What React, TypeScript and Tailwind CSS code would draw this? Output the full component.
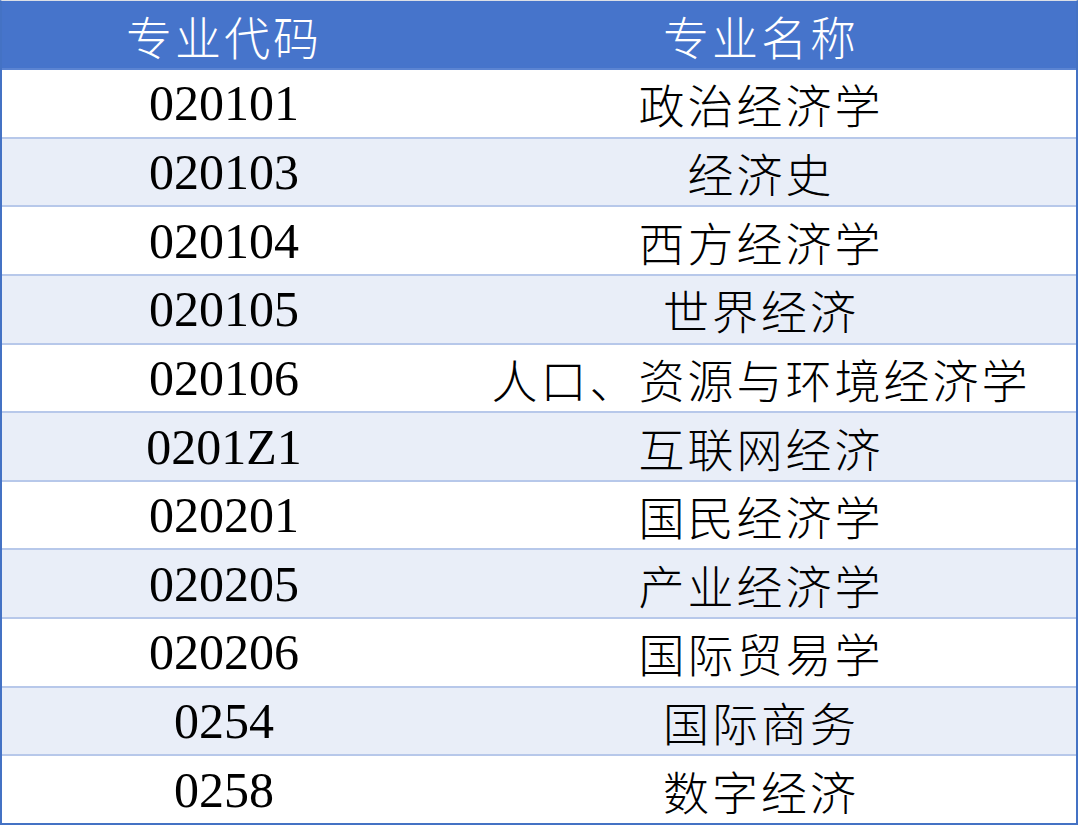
import React from 'react';

const rows: [string, string][] = [
  ['020101', '政治经济学'],
  ['020103', '经济史'],
  ['020104', '西方经济学'],
  ['020105', '世界经济'],
  ['020106', '人口、资源与环境经济学'],
  ['0201Z1', '互联网经济'],
  ['020201', '国民经济学'],
  ['020205', '产业经济学'],
  ['020206', '国际贸易学'],
  ['0254', '国际商务'],
  ['0258', '数字经济'],
];

const cjk = { fontFamily: '"Noto Sans CJK SC", sans-serif' };
const serif = { fontFamily: '"Liberation Serif", "Times New Roman", serif' };

const App: React.FC = () => {
  return (
    <div className="w-[1080px] h-[827px] bg-white">
      <div className="w-[1078px] h-[825px] flex flex-col border-t border-t-[#dcdfe6] border-x-2 border-b-2 border-x-[#4472c4] border-b-[#4472c4]">
        {/* header */}
        <div className="h-[69px] shrink-0 flex bg-[#4674cb] border-b-2 border-[#5b84d2] text-white leading-none">
          <div className="w-[444px] flex items-center justify-center text-[46px] font-light tracking-[3px]" style={cjk}>
            专业代码
          </div>
          <div className="flex-1 flex items-center justify-center text-[46px] font-light tracking-[3px]" style={cjk}>
            专业名称
          </div>
        </div>
        {rows.map(([code, name], i) => (
          <div
            key={code}
            className={`flex-1 min-h-0 flex leading-none ${i === 0 ? '' : 'border-t-2 border-[#b7c8ea]'} ${i % 2 === 1 ? 'bg-[#e9eef8]' : 'bg-white'}`}
          >
            <div className="w-[444px] flex items-center justify-center text-[50px] text-black" style={serif}>
              {code}
            </div>
            <div className="flex-1 flex items-center justify-center text-[46px] font-light tracking-[3px] text-black" style={cjk}>
              {name}
            </div>
          </div>
        ))}
      </div>
    </div>
  );
};

export default App;
